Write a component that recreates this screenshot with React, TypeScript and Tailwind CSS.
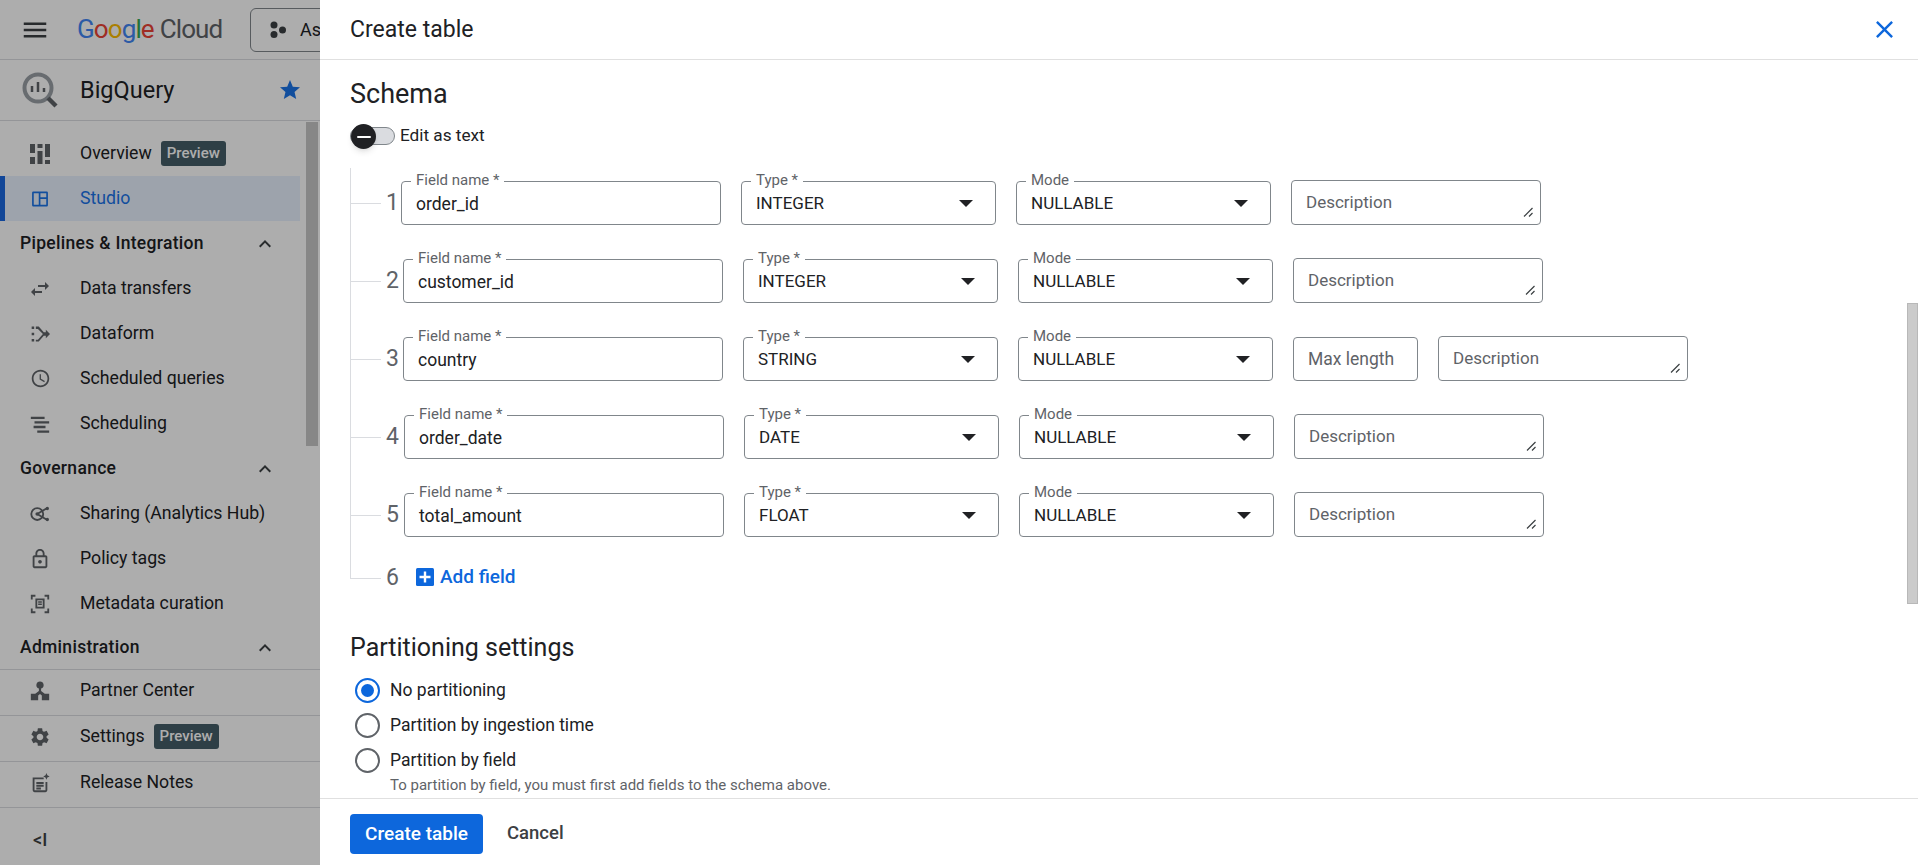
import type { ReactNode } from "react";

const P = {
  menu: "M3 18h18v-2H3v2zm0-5h18v-2H3v2zm0-7v2h18V6H3z",
  star: "M12 17.27L18.18 21l-1.64-7.03L22 9.24l-7.19-.61L12 2 9.19 8.63 2 9.24l5.46 4.73L5.82 21z",
  less: "M12 8l-6 6 1.41 1.41L12 10.83l4.59 4.58L18 14z",
  swap: "M6.99 11L3 15l3.99 4v-3H14v-2H6.99v-3zM21 9l-3.99-4v3H10v2h7.01v3L21 9z",
  settings:
    "M19.14 12.94c.04-.3.06-.61.06-.94 0-.32-.02-.64-.07-.94l2.03-1.58c.18-.14.23-.41.12-.61l-1.92-3.32c-.12-.22-.37-.29-.59-.22l-2.39.96c-.5-.38-1.03-.7-1.62-.94l-.36-2.54c-.04-.24-.24-.41-.48-.41h-3.84c-.24 0-.43.17-.47.41l-.36 2.54c-.59.24-1.13.57-1.62.94l-2.39-.96c-.22-.08-.47 0-.59.22L2.74 8.87c-.12.21-.08.47.12.61l2.03 1.58c-.05.3-.09.63-.09.94s.02.64.07.94l-2.03 1.58c-.18.14-.23.41-.12.61l1.92 3.32c.12.22.37.29.59.22l2.39-.96c.5.38 1.03.7 1.62.94l.36 2.54c.05.24.24.41.48.41h3.84c.24 0 .44-.17.47-.41l.36-2.54c.59-.24 1.13-.56 1.62-.94l2.39.96c.22.08.47 0 .59-.22l1.92-3.32c.12-.22.07-.47-.12-.61l-2.01-1.58zM12 15.6c-1.98 0-3.6-1.62-3.6-3.6s1.62-3.6 3.6-3.6 3.6 1.62 3.6 3.6-1.62 3.6-3.6 3.6z",
  clock:
    "M11.99 2C6.47 2 2 6.48 2 12s4.47 10 9.99 10C17.52 22 22 17.52 22 12S17.52 2 11.99 2zM12 20c-4.42 0-8-3.58-8-8s3.58-8 8-8 8 3.58 8 8-3.58 8-8 8zm.5-13H11v6l5.25 3.15.75-1.23-4.5-2.67z",
  lock: "M18 8h-1V6c0-2.76-2.24-5-5-5S7 3.24 7 6v2H6c-1.1 0-2 .9-2 2v10c0 1.1.9 2 2 2h12c1.1 0 2-.9 2-2V10c0-1.1-.9-2-2-2zM9 6c0-1.66 1.34-3 3-3s3 1.34 3 3v2H9V6zm9 14H6V10h12v10zm-6-3c1.1 0 2-.9 2-2s-.9-2-2-2-2 .9-2 2 .9 2 2 2z",
  close:
    "M19 6.41L17.59 5 12 10.59 6.41 5 5 6.41 10.59 12 5 17.59 6.41 19 12 13.41 17.59 19 19 17.59 13.41 12z",
  overview: "M2 2h5v9H2zM2 15h5v7H2zM9.5 2h5v4h-5zM9.5 9h5v13h-5zM17 2h5v13h-5zM17 18h5v4h-5z",
  studio:
    "M4 3h16a1.5 1.5 0 0 1 1.5 1.5v15A1.5 1.5 0 0 1 20 21H4a1.5 1.5 0 0 1-1.5-1.5v-15A1.5 1.5 0 0 1 4 3zm.5 2v14h6V5h-6zm8 0v5h7V5h-7zm0 7v7h7v-7h-7z",
  dataform:
    "M2 3h3v3H2zM2 10.5h3v3H2zM2 18h3v3H2zM7 3h3.5l6 7H19V7l5 5-5 5v-3h-2.5l-6 7H7v-2h2.5l6-6.9-6-6.1H7z",
  scheduling: "M2 4h15v2.500H2zM6 9h16v2.500H6zM5 14h13v2.500H5zM9 19h13v2.500H9z",
  partner:
    "M12 1.5a4 4 0 0 1 1.2 7.8V12l4 3H22v7h-8v-5l-2-1.7L10 17v5H2v-7h4.8l4-3V9.3A4 4 0 0 1 12 1.5z",
  notes:
    "M4 6h12v2H6v12h12V11h2v9a2 2 0 0 1-2 2H6a2 2 0 0 1-2-2V6zm4 5h8v2H8zm0 3h8v2H8zm0 3h5v2H8zM19 1l1 2.5L22.5 5 20 6l-1 2.5L18 6l-2.5-1L18 3.5z",
  metadata:
    "M2 2h5v2H4v3H2zM17 2h5v5h-2V4h-3zM2 17h2v3h3v2H2zM20 17h2v5h-5v-2h3zM7 6h10v11H7zm2 2v7h6V8zm1 1h4v1.500h-4zm0 2.500h4V13h-4z",
};

function Icon({ d, className }: { d: string; className: string }) {
  return (
    <svg viewBox="0 0 24 24" className={`shrink-0 ${className}`} fill="currentColor">
      <path d={d} />
    </svg>
  );
}

function SharingIcon() {
  return (
    <svg viewBox="0 0 24 24" className="h-[22px] w-[22px] shrink-0 text-[#5f6368]" fill="none" stroke="currentColor" strokeWidth="2">
      <circle cx="9" cy="12" r="6.5" />
      <path d="M9 12l10-6M9 12l10 6" />
      <circle cx="20" cy="6" r="1.8" fill="currentColor" stroke="none" />
      <circle cx="20" cy="18" r="1.800" fill="currentColor" stroke="none" />
      <circle cx="9" cy="12" r="2" fill="currentColor" stroke="none" />
    </svg>
  );
}

function NavItem({
  icon,
  label,
  badge,
  active,
  border,
}: {
  icon: ReactNode;
  label: string;
  badge?: string;
  active?: boolean;
  border?: boolean;
}) {
  return (
    <div
      className={
        active
          ? "flex h-[45px] w-[300px] items-center border-l-[5px] border-[#1a68e0] bg-[#e8f0fe] pl-[24px] text-[#1a73e8]"
          : border
            ? "flex h-[46px] items-center border-b border-[#dadce0] pb-[4px] pl-[29px] text-[#202124]"
            : "flex h-[45px] items-center pl-[29px] text-[#202124]"
      }
    >
      <span className="flex w-[22px] justify-center">{icon}</span>
      <span className="ml-[29px] text-[17.700px]">{label}</span>
      {badge && (
        <span className="ml-[9px] rounded-[3px] bg-[#455d67] px-[6px] py-[2px] text-[15px] leading-[21px] font-medium text-white">
          {badge}
        </span>
      )}
    </div>
  );
}

function SectionHead({ label, border }: { label: string; border?: boolean }) {
  return (
    <div
      className={
        border
          ? "flex h-[44px] w-full items-center justify-between border-b border-[#dadce0] pr-[43px] pl-[20px]"
          : "flex h-[45px] w-[308px] items-center justify-between pr-[31px] pl-[20px]"
      }
    >
      <span className="text-[17.500px] font-medium tracking-[0.3px] text-[#202124]">{label}</span>
      <Icon d={P.less} className="h-[24px] w-[24px] text-[#3c4043]" />
    </div>
  );
}

function Sidebar() {
  const ic = "h-[22px] w-[22px] text-[#5f6368]";
  return (
    <aside className="relative flex h-full w-[320px] shrink-0 flex-col overflow-hidden bg-white">
      <div className="flex h-[60px] shrink-0 items-center border-b border-[#dadce0] pl-[20px]">
        <Icon d={P.menu} className="h-[30px] w-[30px] text-[#3c4043]" />
        <span className="ml-[27px] w-[173px] shrink-0 text-[26px] tracking-[-0.9px] whitespace-nowrap">
          <span className="text-[#4285f4]">G</span>
          <span className="text-[#ea4335]">o</span>
          <span className="text-[#fbbc04]">o</span>
          <span className="text-[#4285f4]">g</span>
          <span className="text-[#34a853]">l</span>
          <span className="text-[#ea4335]">e</span>
          <span className="ml-[6px] text-[#5f6368]">Cloud</span>
        </span>
        <div className="flex h-[44px] w-[200px] shrink-0 items-center rounded-[6px] border border-[#80868b] pl-[18px]">
          <svg viewBox="0 0 18 18" className="h-[18px] w-[18px] text-[#3c4043]" fill="currentColor">
            <circle cx="5" cy="4" r="3.500" />
            <circle cx="5" cy="13.500" r="3.500" />
            <circle cx="13.500" cy="9" r="3.500" />
          </svg>
          <span className="ml-[13px] text-[18px] text-[#202124]">Ask</span>
        </div>
      </div>

      <div className="flex h-[61px] shrink-0 items-center border-b border-[#dadce0] pl-[22px]">
        <svg viewBox="0 0 36 36" className="h-[36px] w-[36px]" fill="none">
          <circle cx="16" cy="16" r="13.500" stroke="#9aa0a6" strokeWidth="4" />
          <path d="M26 26l8 8" stroke="#5f6368" strokeWidth="4.500" />
          <path d="M10 14v6M16 10v10M22 16v4" stroke="#5f6368" strokeWidth="2.500" />
        </svg>
        <span className="ml-[22px] pt-[2px] text-[23.500px] text-[#202124]">BigQuery</span>
        <Icon d={P.star} className="ml-auto mr-[18px] h-[24px] w-[24px] text-[#1a73e8]" />
      </div>

      <nav className="flex flex-1 flex-col pt-[10px]">
        <NavItem icon={<Icon d={P.overview} className="h-[24px] w-[24px] text-[#5f6368]" />} label="Overview" badge="Preview" />
        <NavItem active icon={<Icon d={P.studio} className="h-[20px] w-[20px] text-[#1a73e8]" />} label="Studio" />
        <SectionHead label="Pipelines & Integration" />
        <NavItem icon={<Icon d={P.swap} className="h-[24px] w-[24px] text-[#5f6368]" />} label="Data transfers" />
        <NavItem icon={<Icon d={P.dataform} className="h-[20px] w-[20px] text-[#5f6368]" />} label="Dataform" />
        <NavItem icon={<Icon d={P.clock} className="h-[21px] w-[21px] text-[#5f6368]" />} label="Scheduled queries" />
        <NavItem icon={<Icon d={P.scheduling} className={ic} />} label="Scheduling" />
        <SectionHead label="Governance" />
        <NavItem icon={<SharingIcon />} label="Sharing (Analytics Hub)" />
        <NavItem icon={<Icon d={P.lock} className={ic} />} label="Policy tags" />
        <NavItem icon={<Icon d={P.metadata} className={ic} />} label="Metadata curation" />
        <SectionHead border label="Administration" />
        <NavItem border icon={<Icon d={P.partner} className={ic} />} label="Partner Center" />
        <NavItem border icon={<Icon d={P.settings} className={ic} />} label="Settings" badge="Preview" />
        <NavItem border icon={<Icon d={P.notes} className={ic} />} label="Release Notes" />
        <div className="flex flex-1 items-center pt-[5px] pl-[33px] text-[18px] font-medium text-[#3c4043]">&lt;I</div>
      </nav>

      <div className="absolute top-[122px] right-[2px] h-[324px] w-[12px] bg-[#c8c8c8]" />
      <div className="absolute inset-0 bg-black/32" />
    </aside>
  );
}

function Box({ label, w, children }: { label: string; w: string; children: ReactNode }) {
  return (
    <div className={`relative flex h-[44px] shrink-0 items-center rounded-[4px] border border-[#80868b] pt-[2px] pr-[22px] pl-[14px] ${w}`}>
      <span className="absolute -top-[10px] left-[9px] bg-white px-[5px] text-[15px] leading-[16px] text-[#5f6368]">{label}</span>
      {children}
    </div>
  );
}

function SelectBox({ label, value }: { label: string; value: string }) {
  return (
    <Box label={label} w="w-[255px]">
      <span className="flex-1 text-[17px] text-[#202124]">{value}</span>
      <span className="h-0 w-0 border-x-[7px] border-t-[7px] border-x-transparent border-t-[#202124]" />
    </Box>
  );
}

function Description() {
  return (
    <div className="relative flex h-[45px] w-[250px] shrink-0 -translate-y-[1px] items-center rounded-[4px] border border-[#80868b] pt-[2px] pl-[14px] text-[17px] text-[#5f6368]">
      Description
      <svg viewBox="0 0 10 10" className="absolute right-[7px] bottom-[7px] h-[10px] w-[10px] text-[#3c4043]" fill="none" stroke="currentColor" strokeWidth="1.200">
        <path d="M1 9.500L9.500 1M6 9.500L9.500 6" />
      </svg>
    </div>
  );
}

const rows = [
  { n: 1, name: "order_id", type: "INTEGER", numW: "w-[20px]" },
  { n: 2, name: "customer_id", type: "INTEGER", numW: "w-[22px]" },
  { n: 3, name: "country", type: "STRING", numW: "w-[22px]", maxLen: true },
  { n: 4, name: "order_date", type: "DATE", numW: "w-[23px]" },
  { n: 5, name: "total_amount", type: "FLOAT", numW: "w-[23px]" },
];

function Radio({ label, on }: { label: string; on?: boolean }) {
  return (
    <div className="flex h-[35px] items-center">
      <span
        className={
          on
            ? "flex h-[25px] w-[25px] items-center justify-center rounded-full border-[2px] border-[#0d67dc]"
            : "h-[25px] w-[25px] rounded-full border-[2px] border-[#5f6368]"
        }
      >
        {on && <span className="h-[13px] w-[13px] rounded-full bg-[#0d67dc]" />}
      </span>
      <span className="ml-[10px] text-[17.500px] text-[#202124]">{label}</span>
    </div>
  );
}

function Panel() {
  return (
    <section className="flex h-full min-w-0 flex-1 flex-col bg-white">
      <header className="flex h-[60px] shrink-0 items-center justify-between border-b border-[#e0e0e0] pr-[19px] pl-[30px]">
        <h1 className="pt-[2px] text-[23px] text-[#202124]">Create table</h1>
        <Icon d={P.close} className="h-[29px] w-[29px] text-[#0d67dc]" />
      </header>

      <div className="relative flex-1 overflow-hidden pl-[30px]">
        <h2 className="mt-[16px] text-[27px] leading-[36px] text-[#202124]">Schema</h2>

        <div className="mt-[11px] flex h-[26px] items-center">
          <div className="relative h-[18px] w-[45px] rounded-full border border-[#80868b] bg-[#dadce0]">
            <span className="absolute -top-[4px] left-0 flex h-[25px] w-[25px] items-center justify-center rounded-full bg-[#202124] shadow-md">
              <span className="h-[2px] w-[14px] rounded-full bg-white" />
            </span>
          </div>
          <span className="ml-[5px] text-[17.200px] text-[#202124]">Edit as text</span>
        </div>

        <div className="mt-[19px] border-l border-[#dadce0] pt-[13px]">
          {rows.map((r) => (
            <div key={r.n} className="mb-[34px] flex h-[44px] items-center">
              <span className="h-px w-[30px] shrink-0 bg-[#dadce0]" />
              <span className={`shrink-0 pl-[5px] text-[23px] text-[#5f6368] ${r.numW}`}>{r.n}</span>
              <Box label="Field name *" w="w-[320px]">
                <span className="text-[17.500px] text-[#202124]">{r.name}</span>
              </Box>
              <div className="ml-[20px] flex gap-[20px]">
                <SelectBox label="Type *" value={r.type} />
                <SelectBox label="Mode" value="NULLABLE" />
                {r.maxLen && (
                  <div className="flex h-[44px] w-[125px] shrink-0 items-center rounded-[4px] border border-[#80868b] pt-[2px] pl-[14px] text-[17.500px] text-[#5f6368]">
                    Max length
                  </div>
                )}
                <Description />
              </div>
            </div>
          ))}
          <div className="mt-[41px] flex h-px items-center">
            <span className="h-px w-[30px] shrink-0 bg-[#dadce0]" />
            <span className="w-[35px] shrink-0 pl-[5px] text-[23px] text-[#5f6368]">6</span>
            <svg viewBox="0 0 18 18" className="h-[18px] w-[18px] shrink-0 -translate-y-[2px]">
              <rect width="18" height="18" rx="1.500" fill="#0d67dc" />
              <path d="M7.800 3.500h2.400v4.300h4.300v2.400h-4.300v4.300H7.800v-4.300H3.500V7.800h4.300z" fill="#fff" />
            </svg>
            <span className="ml-[6px] -translate-y-[1px] text-[19px] font-medium text-[#0d67dc]">Add field</span>
          </div>
        </div>

        <h2 className="mt-[52px] text-[25px] leading-[34px] text-[#202124]">Partitioning settings</h2>
        <div className="mt-[8px] pl-[5px]">
          <Radio on label="No partitioning" />
          <Radio label="Partition by ingestion time" />
          <Radio label="Partition by field" />
          <p className="-mt-[3px] pl-[35px] text-[15px] leading-[20px] text-[#5f6368]">
            To partition by field, you must first add fields to the schema above.
          </p>
        </div>

        <div className="absolute top-[243px] right-0 h-[301px] w-[11px] border border-[#b8b8b8] bg-[#cbcbcb]" />
      </div>

      <footer className="flex h-[67px] shrink-0 items-start gap-[24px] border-t border-[#e0e0e0] pt-[15px] pl-[30px]">
        <button className="h-[40px] w-[133px] rounded-[4px] bg-[#0d67dc] text-[19px] font-medium text-white">Create table</button>
        <button className="h-[40px] text-[18.500px] font-medium text-[#3c4043]">Cancel</button>
      </footer>
    </section>
  );
}

export default function App() {
  return (
    <main className="flex h-screen w-full overflow-hidden font-['Roboto',sans-serif]">
      <Sidebar />
      <Panel />
    </main>
  );
}
